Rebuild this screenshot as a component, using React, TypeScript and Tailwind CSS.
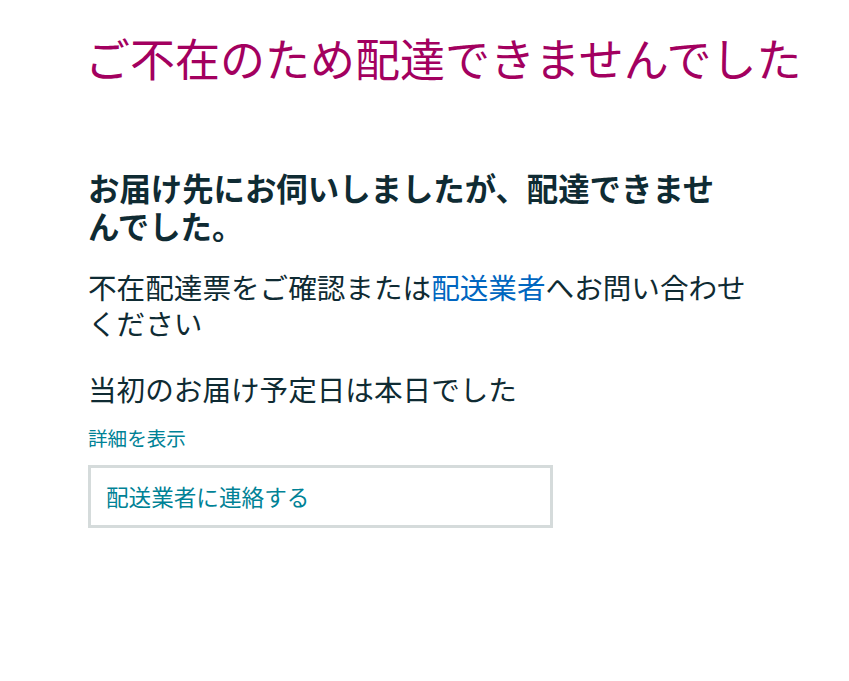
import React from "react";

const font = { fontFamily: '"Noto Sans CJK JP", "Noto Sans", sans-serif' };

export default function App() {
  return (
    <div className="min-h-[681px] bg-white pl-[88px] pt-[31px]" style={font}>
      <h1 className="-ml-[3px] text-[45px] leading-[53px] font-normal text-[#a3005f] whitespace-nowrap">
        ご不在のため配達できませんでした
      </h1>

      <div className="w-[672px]">
        <h2 className="mt-[85px] w-[640px] text-[31.4px] leading-[38px] font-bold text-[#0f2b33]">
          お届け先にお伺いしましたが、配達できませんでした。
        </h2>

        <p className="mt-[24px] text-[28.6px] leading-[36px] text-[#0f2b33]">
          不在配達票をご確認または
          <a href="#" className="text-[#0066c0]">
            配送業者
          </a>
          へお問い合わせください
        </p>

        <p className="mt-[30px] text-[28.6px] leading-[36px] text-[#0f2b33]">
          当初のお届け予定日は本日でした
        </p>

        <a href="#" className="mt-[19px] block text-[19.6px] leading-[24px] text-[#008296]">
          詳細を表示
        </a>

        <button className="mt-[15px] flex h-[63px] w-[465px] items-center border-[3px] border-[#d5dbdb] bg-white pl-[15px] text-left text-[22.6px] text-[#008296]">
          配送業者に連絡する
        </button>
      </div>
    </div>
  );
}
